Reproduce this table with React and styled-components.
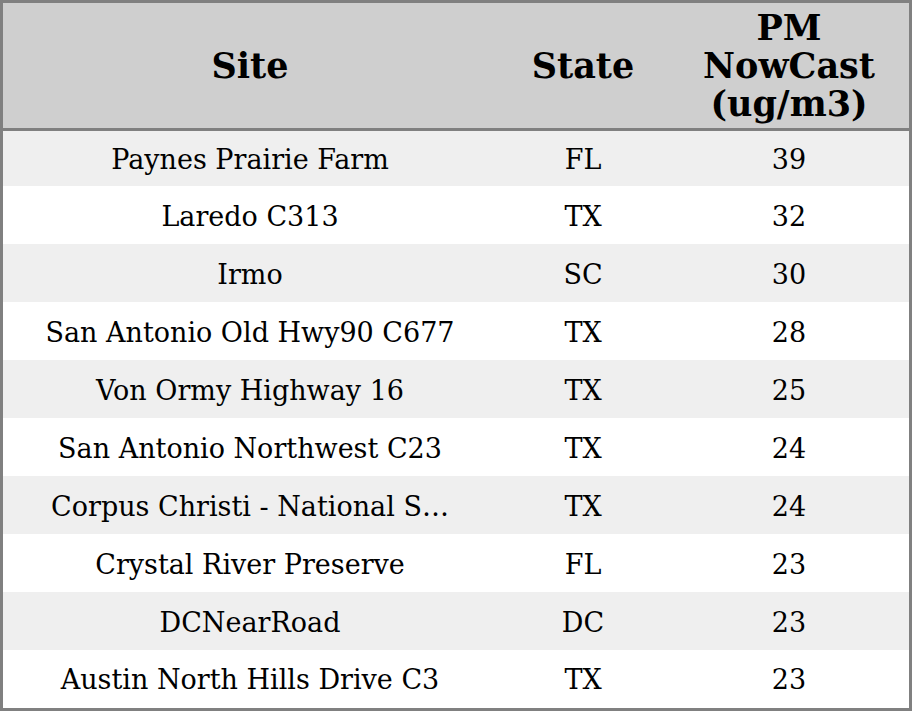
import React from 'react';
import styled, {createGlobalStyle} from 'styled-components';

const rows = [
    {site: 'Paynes Prairie Farm', state: 'FL', pm: 39},
    {site: 'Laredo C313', state: 'TX', pm: 32},
    {site: 'Irmo', state: 'SC', pm: 30},
    {site: 'San Antonio Old Hwy90 C677', state: 'TX', pm: 28},
    {site: 'Von Ormy Highway 16', state: 'TX', pm: 25},
    {site: 'San Antonio Northwest C23', state: 'TX', pm: 24},
    {site: 'Corpus Christi - National S\u2026', state: 'TX', pm: 24},
    {site: 'Crystal River Preserve', state: 'FL', pm: 23},
    {site: 'DCNearRoad', state: 'DC', pm: 23},
    {site: 'Austin North Hills Drive C3', state: 'TX', pm: 23},
];

const App = () => {
    return (
        <>
            <GlobalStyle />
            <Frame>
                <Table>
                    <colgroup>
                        <col style={{width: 494}} />
                        <col style={{width: 172}} />
                        <col style={{width: 240}} />
                    </colgroup>
                    <thead>
                        <tr>
                            <Th>Site</Th>
                            <Th>State</Th>
                            <Th>PM<br/>NowCast<br/>(ug/m3)</Th>
                        </tr>
                    </thead>
                    <tbody>
                        {rows.map((r, i) => (
                            <Row key={i} striped={i % 2 === 0 ? 1 : 0}>
                                <Td>{r.site}</Td>
                                <Td>{r.state}</Td>
                                <Td>{r.pm}</Td>
                            </Row>
                        ))}
                    </tbody>
                </Table>
            </Frame>
        </>
    )
}

//Styles
const GlobalStyle = createGlobalStyle`
    html, body { margin: 0; padding: 0; background: #fff; }
    body { font-family: "DejaVu Serif", "Liberation Serif", serif; color: #000; }
`
const Frame = styled.div`
    width: 912px;
    height: 711px;
    box-sizing: border-box;
    border: 3px solid #808080;
    overflow: hidden;
`
const Table = styled.table`
    width: 906px;
    table-layout: fixed;
    border-collapse: collapse;
    border-spacing: 0;
`
const Th = styled.th`
    height: 125px;
    padding: 0;
    background-color: #cfcfcf;
    border-bottom: 3px solid #808080;
    font-size: 35px;
    font-weight: bold;
    line-height: 38px;
    text-align: center;
    vertical-align: middle;
`
const Row = styled.tr`
    height: 58px;
    background-color: ${p => p.striped ? '#efefef' : '#fff'};
    &:first-child { height: 56px; }
    &:last-child { height: 57px; }
`
const Td = styled.td`
    padding: 4px 0 0;
    font-size: 27px;
    line-height: 30px;
    text-align: center;
    vertical-align: middle;
    white-space: nowrap;
    overflow: hidden;
`
export default App
